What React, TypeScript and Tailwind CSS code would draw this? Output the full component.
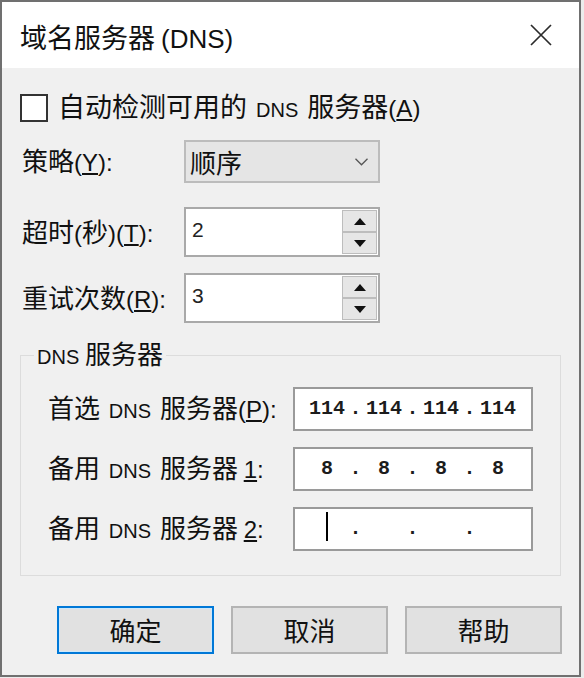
import type { ReactNode } from 'react';

const lat = "font-['Liberation_Sans',sans-serif]";

function Lat({ children, size = 'text-[24px]' }: { children: ReactNode; size?: string }) {
  return <span className={`${lat} ${size}`}>{children}</span>;
}

function Dns() {
  return <span className={`${lat} text-[20px] mx-[3px]`}>DNS</span>;
}

function CloseIcon() {
  return (
    <svg width="22" height="22" viewBox="0 0 22 22" aria-hidden="true">
      <path d="M1 1 L21 21 M21 1 L1 21" stroke="#2b2b2b" strokeWidth="1.7" fill="none" />
    </svg>
  );
}

function SpinButton({ dir }: { dir: 'up' | 'down' }) {
  return (
    <div className="h-[22px] border border-[#bdbdbd] bg-[#e6e6e6] flex items-center justify-center">
      <svg width="12" height="7" viewBox="0 0 12 7" aria-hidden="true">
        {dir === 'up' ? <polygon points="6,0 12,7 0,7" fill="#111" /> : <polygon points="0,0 12,0 6,7" fill="#111" />}
      </svg>
    </div>
  );
}

function SpinBox({ value }: { value: string }) {
  return (
    <div className="w-[196px] h-[50px] border-2 border-[#a9a9a9] bg-white flex">
      <div className={`flex-1 pl-[6px] pt-[10px] leading-[22px] text-[21px] ${lat} text-[#222]`}>{value}</div>
      <div className="w-[35px] mr-[1px] py-[1px] flex flex-col">
        <SpinButton dir="up" />
        <SpinButton dir="down" />
      </div>
    </div>
  );
}

function IpField({ parts, cursor }: { parts: string[]; cursor?: boolean }) {
  return (
    <div className="w-[240px] h-[44px] border-2 border-[#9a9a9a] bg-white flex items-center pl-[10px] font-['Liberation_Mono',monospace] font-bold text-[20px] text-[#1c1c1c]">
      {parts.map((p, i) => (
        <div key={i} className="flex items-center">
          <span className="w-[44px] text-center relative h-[30px] leading-[30px]">
            {p}
            {cursor && i === 0 && (
              <span className="absolute left-[21px] top-[-2px] w-[2px] h-[29px] bg-black" />
            )}
          </span>
          {i < 3 && <span className="w-[13px] text-center leading-[30px]">.</span>}
        </div>
      ))}
    </div>
  );
}

function Button({ label, primary }: { label: string; primary?: boolean }) {
  return (
    <button
      className={
        primary
          ? 'w-[157px] h-[48px] bg-[#e1e1e1] border-2 border-[#0078d7] shadow-[inset_0_0_0_1px_#cde8fb] text-[26px] leading-[30px]'
          : 'w-[157px] h-[48px] bg-[#e1e1e1] border-2 border-[#b4b4b4] text-[26px] leading-[30px]'
      }
    >
      {label}
    </button>
  );
}

export default function App() {
  return (
    <div className="w-[584px] h-[678px] bg-[#ececec] font-['Noto_Sans_CJK_SC',sans-serif] text-[26px] text-[#111]">
      <div className="w-[581px] h-[677px] border-2 border-[#707070] bg-[#f0f0f0] flex flex-col">
        <div className="h-[66px] bg-white flex items-start justify-between pl-[18px] pr-[27px] pt-[22px]">
          <span className="text-[27px] leading-[30px] -mt-[2px]">
            域名服务器 <Lat size="text-[26px]">(DNS)</Lat>
          </span>
          <CloseIcon />
        </div>

        <div className="flex-1 pl-[18px] pt-[26px]">
          <label className="flex items-center h-[28px]">
            <span className="w-[28px] h-[28px] border-2 border-[#333] bg-white" />
            <span className="ml-[10px] leading-[28px] text-[27px]">
              自动检测可用的 <Dns /> 服务器<Lat>(<span className="underline">A</span>)</Lat>
            </span>
          </label>

          <div className="flex items-center mt-[18px]">
            <span className="w-[164px] pl-[2px] leading-[30px]">
              策略<Lat>(<span className="underline">Y</span>):</Lat>
            </span>
            <div className="w-[196px] h-[43px] bg-[#e5e5e5] border-2 border-[#bcbcbc] flex items-center justify-between pl-[4px] pr-[10px]">
              <span className="leading-[30px]">顺序</span>
              <svg width="13" height="8" viewBox="0 0 13 8" aria-hidden="true">
                <path d="M0.5 0.8 L6.5 6.8 L12.5 0.8" stroke="#555" strokeWidth="1.3" fill="none" />
              </svg>
            </div>
          </div>

          <div className="flex items-center mt-[24px]">
            <span className="w-[164px] pl-[2px] leading-[30px]">
              超时<Lat>(</Lat>秒<Lat>)(<span className="underline">T</span>):</Lat>
            </span>
            <SpinBox value="2" />
          </div>

          <div className="flex items-center mt-[16px]">
            <span className="w-[164px] pl-[2px] leading-[30px]">
              重试次数<Lat>(<span className="underline">R</span>):</Lat>
            </span>
            <SpinBox value="3" />
          </div>

          <fieldset className="w-[541px] mt-[16px] border border-[#dcdcdc] pb-[24px]">
            <legend className="ml-[13px] px-[3px] leading-[28px]">
              <span className={`${lat} text-[20px]`}>DNS</span> 服务器
            </legend>
            <div className="flex flex-col gap-[16px] pl-[27px] mt-[16px]">
              <div className="flex items-center h-[44px]">
                <span className="w-[245px] leading-[30px]">
                  首选 <Dns /> 服务器<Lat>(<span className="underline">P</span>):</Lat>
                </span>
                <IpField parts={['114', '114', '114', '114']} />
              </div>
              <div className="flex items-center h-[44px]">
                <span className="w-[245px] leading-[30px]">
                  备用 <Dns /> 服务器 <Lat><span className="underline">1</span>:</Lat>
                </span>
                <IpField parts={['8', '8', '8', '8']} />
              </div>
              <div className="flex items-center h-[44px]">
                <span className="w-[245px] leading-[30px]">
                  备用 <Dns /> 服务器 <Lat><span className="underline">2</span>:</Lat>
                </span>
                <IpField parts={['', '', '', '']} cursor />
              </div>
            </div>
          </fieldset>

          <div className="flex gap-[17px] ml-[37px] mt-[30px]">
            <Button label="确定" primary />
            <Button label="取消" />
            <Button label="帮助" />
          </div>
        </div>
      </div>
    </div>
  );
}
